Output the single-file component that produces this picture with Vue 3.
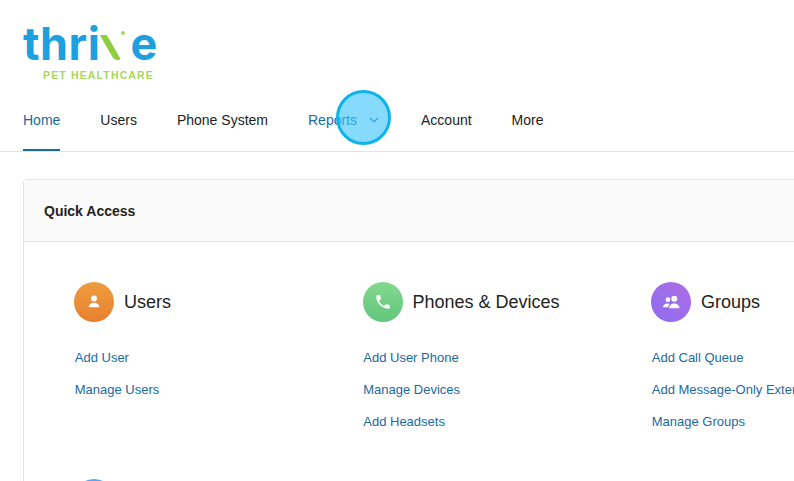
<script setup>
const navItems = [
  { label: "Home", active: true },
  { label: "Users" },
  { label: "Phone System" },
  { label: "Reports", hover: true, caret: true },
  { label: "Account" },
  { label: "More" },
];

const sections = [
  {
    id: "users",
    title: "Users",
    icon: "user",
    links: ["Add User", "Manage Users"],
  },
  {
    id: "phones",
    title: "Phones & Devices",
    icon: "phone",
    links: ["Add User Phone", "Manage Devices", "Add Headsets"],
  },
  {
    id: "groups",
    title: "Groups",
    icon: "group",
    links: ["Add Call Queue", "Add Message-Only Extension", "Manage Groups"],
  },
  {
    // only the top of this badge is visible in the window
    id: "next",
    title: "",
    icon: "report",
    links: [],
  },
];
</script>

<template>
  <div class="page">
    <header class="top">
      <div class="logo">
        <div class="wordmark">
          <span>thri</span><span class="slash"><i class="spark"></i></span><span>e</span>
        </div>
        <div class="tagline">PET HEALTHCARE</div>
      </div>
      <nav class="nav">
        <a
          v-for="item in navItems"
          :key="item.label"
          class="nav-item"
          :class="{ active: item.active, hover: item.hover }"
        >
          {{ item.label }}
          <svg v-if="item.caret" class="caret" viewBox="0 0 10 6" width="10" height="6">
            <path d="M1 1l4 4 4-4" fill="none" stroke="currentColor" stroke-width="1.2" />
          </svg>
        </a>
      </nav>
      <div class="click-mark"></div>
    </header>

    <section class="card">
      <div class="card-head">Quick Access</div>
      <div class="card-body">
        <div v-for="s in sections" :key="s.id" class="group">
          <div class="group-head">
            <span class="badge" :class="s.icon">
              <svg v-if="s.icon === 'user'" viewBox="0 0 16 16" width="16" height="16">
                <circle cx="8" cy="4.6" r="3" fill="#fff" />
                <path d="M2.8 13.2c0-2.8 2.2-4.4 5.2-4.4s5.2 1.6 5.2 4.4z" fill="#fff" />
              </svg>
              <svg v-if="s.icon === 'phone'" viewBox="0 0 24 24" width="18" height="18">
                <path
                  fill="#fff"
                  d="M6.6 10.8c1.4 2.8 3.8 5.1 6.6 6.6l2.2-2.2c.3-.3.7-.4 1-.2 1.1.4 2.3.6 3.6.6.6 0 1 .4 1 1V20c0 .6-.4 1-1 1C10.6 21 3 13.4 3 4c0-.6.4-1 1-1h3.5c.6 0 1 .4 1 1 0 1.3.2 2.5.6 3.6.1.3 0 .7-.2 1z"
                />
              </svg>
              <svg v-if="s.icon === 'group'" viewBox="0 0 20 16" width="19" height="15">
                <circle cx="6.2" cy="5" r="2.5" fill="#fff" />
                <circle cx="13" cy="4" r="3.2" fill="#fff" />
                <path d="M1 13c0-2.6 2.2-4 4.6-4 1 0 1.8.2 2.5.6-1 .8-1.6 2-1.6 3.4z" fill="#fff" />
                <path d="M7.5 14c0-3 2.6-5 5.5-5s5.5 2 5.5 5z" fill="#fff" />
              </svg>
            </span>
            <h3 v-if="s.title">{{ s.title }}</h3>
          </div>
          <ul>
            <li v-for="link in s.links" :key="link"><a>{{ link }}</a></li>
          </ul>
        </div>
      </div>
    </section>
  </div>
</template>

<style>
html,
body {
  margin: 0;
  overflow: hidden;
  background: #fff;
}
</style>

<style scoped>
.page {
  width: 794px;
  height: 481px;
  overflow: hidden;
  font-family: "Liberation Sans", Arial, sans-serif;
  color: #222;
}

.top {
  position: relative;
  height: 152px;
  box-sizing: border-box;
  border-bottom: 1px solid #e3e3e3;
  padding: 21px 0 0 23px;
}

.logo {
  height: 67px;
}

.wordmark {
  display: flex;
  align-items: baseline;
  height: 46px;
  font-family: Inter, sans-serif;
  font-weight: 700;
  font-size: 45px;
  line-height: 46px;
  letter-spacing: 0.5px;
  color: #1d9fe0;
}

.slash {
  position: relative;
  width: 30px;
  height: 20px;
}

.slash::before {
  content: "";
  position: absolute;
  left: 7px;
  top: -5px;
  width: 7px;
  height: 25px;
  border-radius: 1px 1px 3px 3px;
  background: #8fce3f;
  transform: skewX(30deg);
}

.spark {
  position: absolute;
  left: 21px;
  top: -9px;
  width: 4px;
  height: 4px;
  border-radius: 50%;
  background: #a5d85c;
}

.tagline {
  margin: 2px 0 0 20px;
  font-size: 10.5px;
  line-height: 12px;
  font-weight: 700;
  letter-spacing: 1.15px;
  color: #a5d85c;
  white-space: nowrap;
}

.nav {
  display: flex;
  gap: 40px;
  height: 63px;
}

.nav-item {
  display: flex;
  align-items: center;
  gap: 12px;
  box-sizing: border-box;
  height: 63px;
  padding-top: 2px;
  font-size: 14px;
  color: #222;
  white-space: nowrap;
  border-bottom: 2px solid transparent;
}

.nav-item.active {
  color: #1a6aa0;
  border-bottom-color: #1a6aa0;
}

.nav-item.hover {
  color: #1a6aa0;
}

.caret {
  margin: 1px 2px 0 0;
}

.click-mark {
  position: absolute;
  left: 336px;
  top: 90px;
  width: 55px;
  height: 55px;
  box-sizing: border-box;
  border: 3px solid #0cb4e8;
  border-radius: 50%;
  background: rgba(60, 195, 250, 0.62);
}

.card {
  width: 1100px;
  margin: 27px 0 0 23px;
  border: 1px solid #e3e3e3;
  border-radius: 4px;
}

.card-head {
  height: 62px;
  box-sizing: border-box;
  padding-left: 20px;
  display: flex;
  align-items: center;
  border-bottom: 1px solid #e3e3e3;
  background: #fafafa;
  font-size: 14px;
  font-weight: 700;
}

.card-body {
  display: grid;
  grid-template-columns: repeat(3, 288.5px);
  grid-auto-rows: 197px;
  padding: 40px 0 0 50px;
}

.group-head {
  display: flex;
  align-items: center;
  gap: 10px;
}

.badge {
  flex: none;
  display: flex;
  align-items: center;
  justify-content: center;
  width: 40px;
  height: 40px;
  border-radius: 50%;
}

.badge.user {
  background: linear-gradient(#ee9c3f, #e8812f);
}

.badge.phone {
  background: linear-gradient(#83d88f, #62c67c);
}

.badge.group {
  background: linear-gradient(45deg, #8f6cf0, #ad6ee6);
}

.badge.report {
  background: linear-gradient(#5aa5f0, #4a8ff0);
}

h3 {
  margin: 0;
  font-size: 18px;
  font-weight: 400;
  color: #222;
}

ul {
  list-style: none;
  margin: 28px 0 0;
  padding: 0 0 0 0.75px;
}

li {
  height: 32px;
  font-size: 13px;
  line-height: 16px;
  white-space: nowrap;
}

li a {
  color: #1a6aa0;
}
</style>
